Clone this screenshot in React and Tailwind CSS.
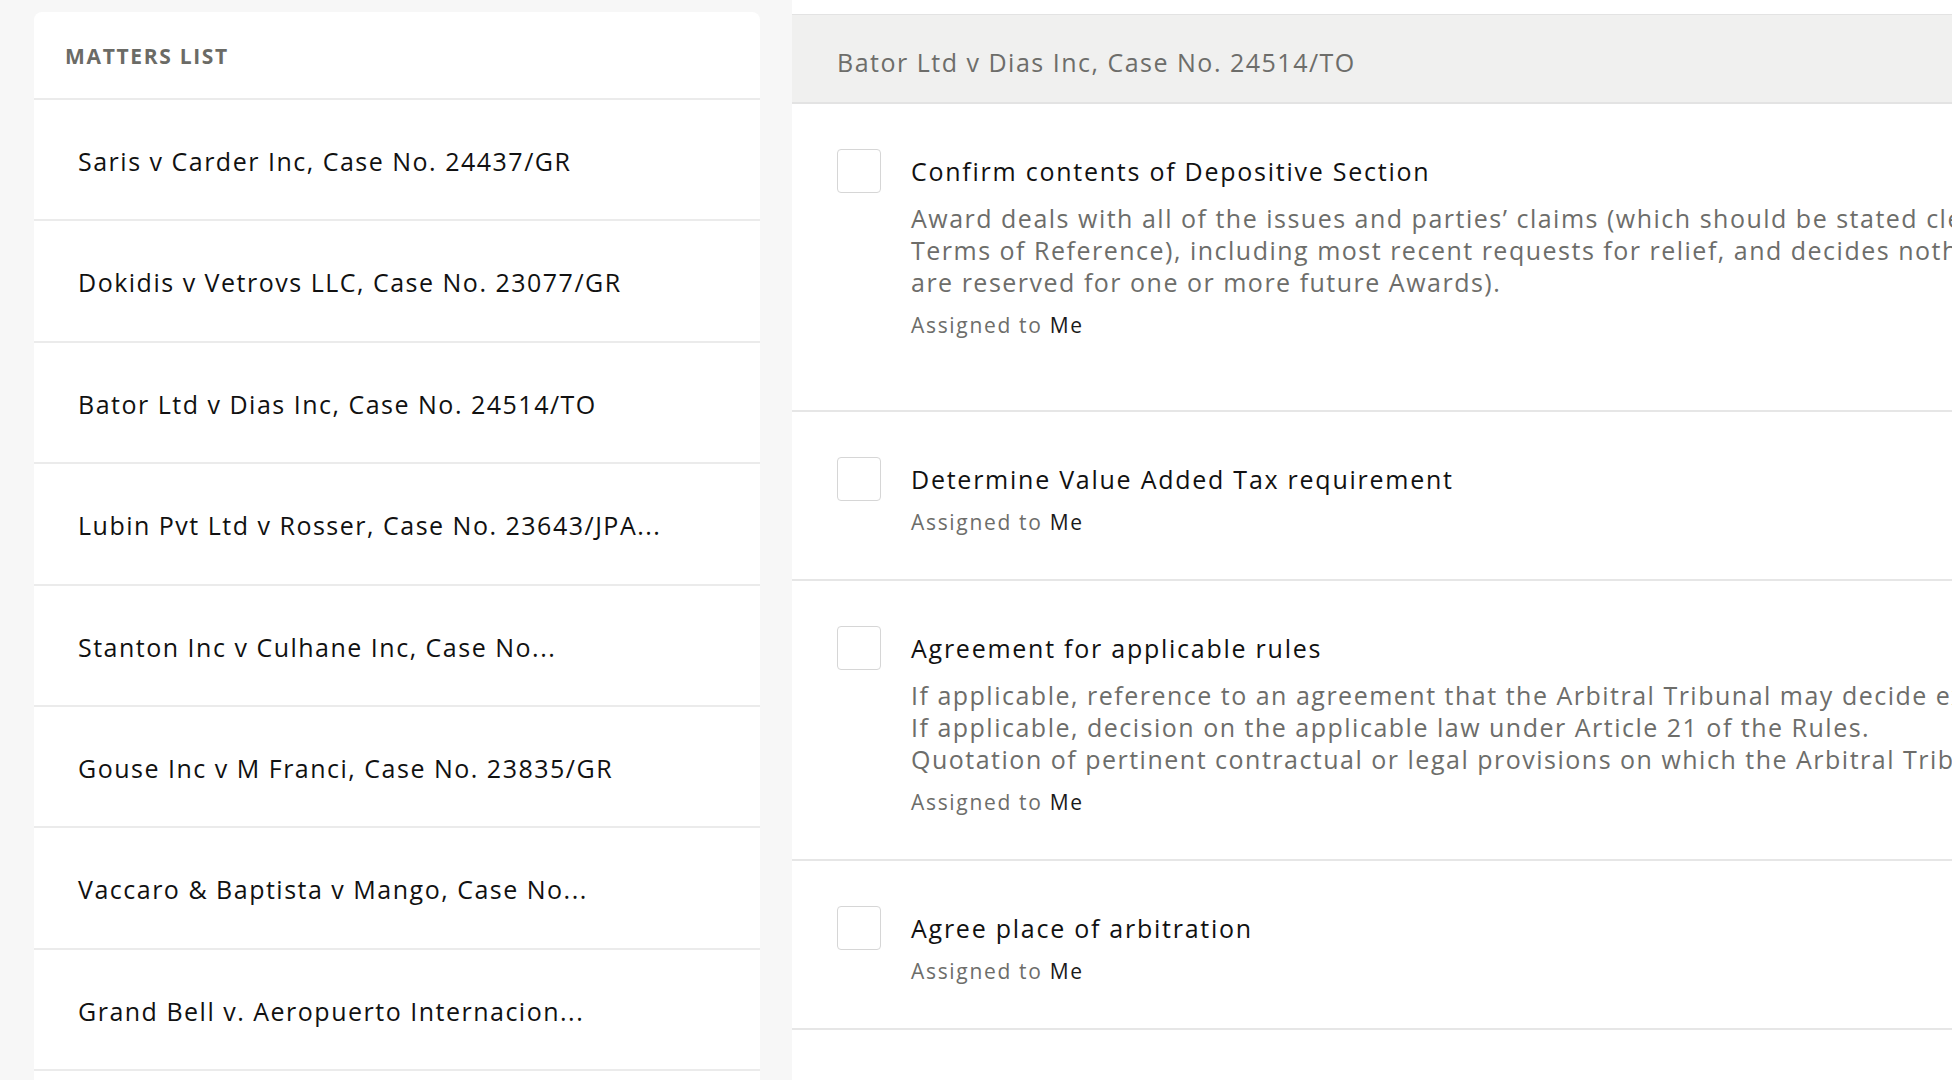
const matters = [
  'Saris v Carder Inc, Case No. 24437/GR',
  'Dokidis v Vetrovs LLC, Case No. 23077/GR',
  'Bator Ltd v Dias Inc, Case No. 24514/TO',
  'Lubin Pvt Ltd v Rosser, Case No. 23643/JPA...',
  'Stanton Inc v Culhane Inc, Case No...',
  'Gouse Inc v M Franci, Case No. 23835/GR',
  'Vaccaro & Baptista v Mango, Case No...',
  'Grand Bell v. Aeropuerto Internacion...',
  '',
]

const tasks = [
  {
    title: 'Confirm contents of Depositive Section',
    lines: [
      'Award deals with all of the issues and parties’ claims (which should be stated clearly in the',
      'Terms of Reference), including most recent requests for relief, and decides nothing more (unless issues',
      'are reserved for one or more future Awards).',
    ],
    extra: true,
  },
  { title: 'Determine Value Added Tax requirement', lines: [] },
  {
    title: 'Agreement for applicable rules',
    lines: [
      'If applicable, reference to an agreement that the Arbitral Tribunal may decide ex aequo et bono.',
      'If applicable, decision on the applicable law under Article 21 of the Rules.',
      'Quotation of pertinent contractual or legal provisions on which the Arbitral Tribunal relies.',
    ],
  },
  { title: 'Agree place of arbitration', lines: [] },
]

function TaskRow({ task }) {
  return (
    <div className={`flex gap-[30px] pl-[45px] pt-[45px] border-b-2 border-[#e6e6e6] ${task.extra ? 'pb-[71px]' : 'pb-[43px]'}`}>
      <div className="w-[44px] h-[44px] shrink-0 rounded-[4px] border-[1.5px] border-[#d6d6d6] bg-white" />
      <div className="min-w-0 flex-1">
        <p className="leading-[44px] text-[25px] tracking-[0.07em] text-[#111] whitespace-nowrap">{task.title}</p>
        {task.lines.length > 0 && (
          <div className="mt-[9px] mb-[13px] text-[25px] tracking-[0.06em] leading-[32px] text-[#6d6d6a]">
            {task.lines.map(l => (
              <p key={l} className="whitespace-nowrap">{l}</p>
            ))}
          </div>
        )}
        <p className="mt-[7px] text-[21px] tracking-[0.08em] leading-[28px] text-[#6d6d6a]">
          Assigned to <span className="text-[#1a1a1a]">Me</span>
        </p>
      </div>
    </div>
  )
}

export default function App() {
  return (
    <div className="h-[1080px] overflow-hidden bg-[#f7f7f7] flex gap-8 pl-[34px] font-['Open_Sans',sans-serif]">
      <aside className="w-[726px] shrink-0 mt-3 bg-white rounded-lg self-start">
        <div className="h-[88px] flex items-center px-[31px] pt-1 border-b-2 border-[#ebebeb]">
          <h2 className="text-[21px] font-bold tracking-[0.08em] text-[#6b6b66] uppercase">Matters List</h2>
        </div>
        {matters.map((m, i) => (
          <div key={i} className="h-[121.4px] flex items-center px-[44px] pt-1 border-b-2 border-[#ebebeb]">
            <span className="text-[25px] tracking-[0.06em] text-[#111] whitespace-nowrap">{m}</span>
          </div>
        ))}
      </aside>

      <main className="flex-1 min-w-0 bg-white pt-[14px] overflow-hidden">
        <div className="border-t border-[#e3e3e3] border-b-2 border-b-[#e3e3e3] bg-[#f0f0ef] pl-[45px] pt-[31px] pb-[24px]">
          <h1 className="text-[25px] tracking-[0.06em] leading-[32px] text-[#6d6d6a] whitespace-nowrap">Bator Ltd v Dias Inc, Case No. 24514/TO</h1>
        </div>
        {tasks.map(t => (
          <TaskRow key={t.title} task={t} />
        ))}
      </main>
    </div>
  )
}
